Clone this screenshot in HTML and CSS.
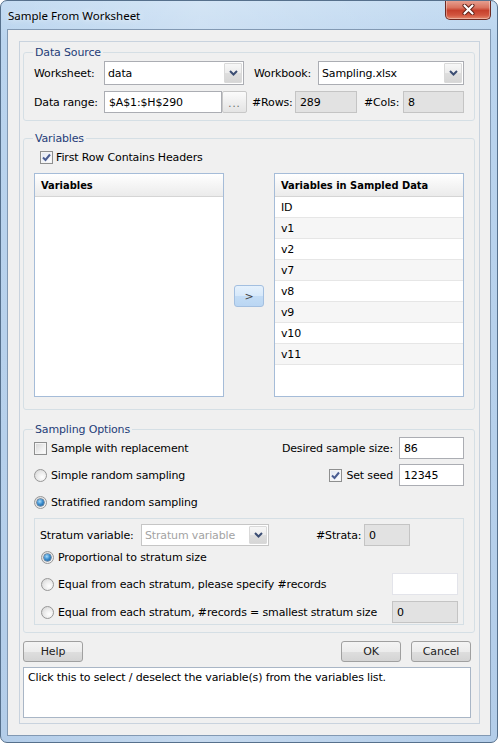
FILE: index.html
```html
<!DOCTYPE html>
<html>
<head>
<meta charset="utf-8">
<title>Sample From Worksheet</title>
<link rel="stylesheet" href="styles.css">
</head>
<body>
<div class="window">
  <div class="titlebar">
    <span class="title">Sample From Worksheet</span>
    <div class="close-btn">
      <svg width="13" height="11" viewBox="0 0 13 11"><path d="M2.5 1.5 L10.5 9.5 M10.5 1.5 L2.5 9.5" stroke="#5b1d14" stroke-width="4" stroke-linecap="round"/><path d="M2.5 1.5 L10.5 9.5 M10.5 1.5 L2.5 9.5" stroke="#fff" stroke-width="2.2" stroke-linecap="round"/></svg>
    </div>
  </div>
  <div class="client">
    <div class="panel">
      <fieldset class="group source">
        <legend>Data Source</legend>
        <div class="src-row src-row-top">
          <span class="lbl lbl-ws">Worksheet:</span>
          <div class="combo combo-ws"><span class="combo-val">data</span><span class="combo-drop"><svg width="9" height="6" viewBox="0 0 9 6"><path d="M1 1 L4.5 4.5 L8 1" fill="none" stroke="#3b4d73" stroke-width="2"/></svg></span></div>
          <span class="lbl lbl-wb">Workbook:</span>
          <div class="combo combo-wb"><span class="combo-val">Sampling.xlsx</span><span class="combo-drop"><svg width="9" height="6" viewBox="0 0 9 6"><path d="M1 1 L4.5 4.5 L8 1" fill="none" stroke="#3b4d73" stroke-width="2"/></svg></span></div>
        </div>
        <div class="src-row src-row-bottom">
          <span class="lbl lbl-ws">Data range:</span>
          <div class="tb tb-range">$A$1:$H$290</div>
          <div class="dots-btn">...</div>
          <span class="lbl lbl-rows">#Rows:</span>
          <div class="tb ro tb-rows">289</div>
          <span class="lbl lbl-cols">#Cols:</span>
          <div class="tb ro tb-cols">8</div>
        </div>
      </fieldset>

      <fieldset class="group variables">
        <legend>Variables</legend>
        <div class="check-row headers-row">
          <span class="cb checked"><svg width="11" height="11" viewBox="0 0 11 11"><path d="M2 5.5 L4.5 8 L9 2.5" fill="none" stroke="#4a5d92" stroke-width="2"/></svg></span>
          <span>First Row Contains Headers</span>
        </div>
        <div class="lists">
          <div class="list">
            <div class="list-head">Variables</div>
          </div>
          <div class="move-btn">&gt;</div>
          <div class="list">
            <div class="list-head">Variables in Sampled Data</div>
            <div class="list-item">ID</div>
            <div class="list-item alt">v1</div>
            <div class="list-item">v2</div>
            <div class="list-item alt">v7</div>
            <div class="list-item">v8</div>
            <div class="list-item alt">v9</div>
            <div class="list-item">v10</div>
            <div class="list-item alt">v11</div>
          </div>
        </div>
      </fieldset>

      <fieldset class="group sampling">
        <legend>Sampling Options</legend>
        <div class="opt-row">
          <div class="opt-left"><span class="cb"></span><span class="opt-text">Sample with replacement</span></div>
          <div class="opt-right"><span>Desired sample size:</span><div class="tb tb-num">86</div></div>
        </div>
        <div class="opt-row">
          <div class="opt-left"><span class="rb"></span><span class="opt-text">Simple random sampling</span></div>
          <div class="opt-right"><span class="cb checked"><svg width="11" height="11" viewBox="0 0 11 11"><path d="M2 5.5 L4.5 8 L9 2.5" fill="none" stroke="#4a5d92" stroke-width="2"/></svg></span><span class="seed-text">Set seed</span><div class="tb tb-num">12345</div></div>
        </div>
        <div class="opt-row">
          <div class="opt-left"><span class="rb on"></span><span class="opt-text">Stratified random sampling</span></div>
        </div>
        <div class="strata-box">
          <div class="strata-row">
            <span class="lbl lbl-stratum">Stratum variable:</span>
            <div class="combo combo-stratum disabled"><span class="combo-val">Stratum variable</span><span class="combo-drop"><svg width="9" height="6" viewBox="0 0 9 6"><path d="M1 1 L4.5 4.5 L8 1" fill="none" stroke="#3b4d73" stroke-width="2"/></svg></span></div>
            <span class="lbl lbl-strata">#Strata:</span>
            <div class="tb ro tb-strata">0</div>
          </div>
          <div class="strata-opt strata-prop">
            <div class="opt-left"><span class="rb on"></span><span class="opt-text">Proportional to stratum size</span></div>
          </div>
          <div class="strata-opt strata-eq1">
            <div class="opt-left"><span class="rb"></span><span class="opt-text">Equal from each stratum, please specify #records</span></div>
            <div class="tb tb-eq blank"></div>
          </div>
          <div class="strata-opt strata-eq2">
            <div class="opt-left"><span class="rb"></span><span class="opt-text">Equal from each stratum, #records = smallest stratum size</span></div>
            <div class="tb ro tb-eq">0</div>
          </div>
        </div>
      </fieldset>

      <div class="button-row">
        <div class="btn">Help</div>
        <div class="btn-group">
          <div class="btn">OK</div>
          <div class="btn">Cancel</div>
        </div>
      </div>
      <div class="desc">Click this to select / deselect the variable(s) from the variables list.</div>
    </div>
  </div>
</div>
</body>
</html>
```

FILE: styles.css
```css
* { box-sizing: border-box; }
html, body { margin: 0; padding: 0; }
body {
  width: 498px;
  height: 743px;
  background: #ffffff;
  font-family: "DejaVu Sans", sans-serif;
  font-size: 11px;
  letter-spacing: -0.15px;
  color: #000;
  overflow: hidden;
}

.window {
  width: 498px;
  height: 743px;
  border: 1px solid #56708c;
  border-radius: 7px;
  background: linear-gradient(90deg, rgba(255,255,255,0.0) 0%, rgba(255,255,255,0.25) 40%, rgba(255,255,255,0.0) 100%),
              linear-gradient(180deg, #c5dcf2 0%, #bad4ee 40px, #b3cde9 100%);
  display: flex;
  flex-direction: column;
  overflow: hidden;
}

.titlebar {
  height: 28px;
  flex: none;
  display: flex;
  align-items: center;
  justify-content: space-between;
  padding-left: 7px;
}
.title {
  font-family: "Noto Sans", "DejaVu Sans", sans-serif;
  font-size: 11.5px;
  letter-spacing: 0;
  color: #000;
  text-shadow: 0 0 6px rgba(255,255,255,0.9);
}
.close-btn {
  align-self: flex-start;
  width: 46px;
  height: 20px;
  margin-right: 6px;
  margin-top: -1px;
  border: 1px solid #6e2a22;
  border-top: none;
  border-radius: 0 0 5px 5px;
  background: linear-gradient(180deg, #e8a596 0%, #d9735f 40%, #c6402c 55%, #d2563f 80%, #e48a6e 100%);
  display: flex;
  align-items: center;
  justify-content: center;
  box-shadow: inset 0 0 0 1px rgba(255,255,255,0.35);
}

.client {
  flex: none;
  height: 707px;
  margin: 0 6px 6px 6px;
  border: 1px solid #8299b3;
  background: #f0f0f0;
  padding: 11px 10px 11px 11px;
}

.panel {
  height: 683px;
  border: 1px solid #c9d3de;
  padding: 4px 4px 4px 3px;
}

.group {
  margin: 0;
  border: 1px solid #d5dfe5;
  border-radius: 3px;
  padding: 2px 9px 8px 10px;
  min-width: 0;
}
.group legend {
  padding: 0 2px;
  margin-left: -1px;
  line-height: 13px;
  color: #1f3d78;
}

.lbl { white-space: nowrap; }

/* Data source */
.source { padding-bottom: 7px; }
.src-row { display: flex; align-items: center; }
.src-row-top { height: 24px; }
.src-row-bottom { height: 22px; margin-top: 6px; }
.lbl-ws { width: 70px; }
.lbl-wb { width: 64px; margin-left: 10px; }
.lbl-rows { width: 43px; margin-left: 5px; }
.lbl-cols { width: 39px; margin-left: 7px; }

.combo {
  height: 24px;
  border: 1px solid #abadb3;
  background: #fff;
  display: flex;
  align-items: stretch;
}
.combo-ws { width: 140px; }
.combo-wb { width: 146px; }
.combo-val {
  flex: 1;
  display: flex;
  align-items: center;
  padding-left: 3px;
  white-space: nowrap;
  overflow: hidden;
}
.combo-drop {
  width: 18px;
  margin: 1px;
  border: 1px solid #d9d9d9;
  border-radius: 1px;
  background: linear-gradient(180deg, #f7f7f7 0%, #ececec 50%, #dedede 51%, #d6d6d6 100%);
  display: flex;
  align-items: center;
  justify-content: center;
}

.tb {
  height: 22px;
  border: 1px solid #abadb3;
  background: #fff;
  padding: 0 4px;
  display: flex;
  align-items: center;
  white-space: nowrap;
}
.tb.ro { background: #e2e2e2; border-color: #c4c4c4; }
.tb-range { width: 118px; }
.tb-rows { width: 62px; }
.tb-cols { width: 61px; }
.dots-btn {
  width: 25px;
  height: 22px;
  border: 1px solid #c8c8c8;
  border-radius: 2px;
  background: linear-gradient(180deg, #fbfbfb 0%, #efefef 50%, #e4e4e4 100%);
  color: #666;
  font-size: 10px;
  display: flex;
  align-items: flex-end;
  justify-content: center;
  padding-bottom: 3px;
  letter-spacing: 1px;
}

/* Variables */
.variables { margin-top: 11px; padding: 5px 10px 12px 10px; }
.check-row { display: flex; align-items: center; height: 15px; }
.headers-row { padding-left: 6px; gap: 3px; }

.cb {
  width: 13px;
  height: 13px;
  flex: none;
  border: 1px solid #8e8f8f;
  background: linear-gradient(135deg, #d4d4d4 0%, #f0f0f0 60%, #ffffff 100%);
  box-shadow: inset 0 0 0 1px #f4f4f4;
  display: inline-flex;
  align-items: center;
  justify-content: center;
}
.cb.checked { background: linear-gradient(135deg, #dfe6f2 0%, #f3f5fa 60%, #ffffff 100%); }

.rb {
  width: 13px;
  height: 13px;
  flex: none;
  border-radius: 50%;
  border: 1px solid #979797;
  background: radial-gradient(circle at 65% 65%, #ffffff 0%, #eaeaea 50%, #cfcfcf 100%);
  display: inline-flex;
  align-items: center;
  justify-content: center;
}
.rb.on::after {
  content: "";
  width: 7px;
  height: 7px;
  border-radius: 50%;
  background: radial-gradient(circle at 40% 35%, #a9dcfb 0%, #3d8fcf 45%, #134f86 100%);
  box-shadow: 0 0 0 0.5px #1b3d62;
}

.lists {
  margin-top: 8px;
  display: grid;
  grid-template-columns: 190px 1fr 190px;
}
.list {
  height: 224px;
  border: 1px solid #a5bcd8;
  background: #fff;
}
.list-head {
  height: 23px;
  border-bottom: 1px solid #d5d5d5;
  background: linear-gradient(180deg, #ffffff 0%, #f5f5f5 50%, #ebebeb 100%);
  font-family: "DejaVu Sans Condensed", "DejaVu Sans", sans-serif;
  font-weight: bold;
  letter-spacing: 0;
  padding-left: 6px;
  display: flex;
  align-items: center;
}
.list-item {
  height: 21px;
  border-bottom: 1px solid #e6e6e6;
  padding-left: 6px;
  display: flex;
  align-items: center;
}
.list-item.alt { background: #f6f6f6; }
.move-btn {
  justify-self: center;
  align-self: start;
  margin-top: 112px;
  width: 30px;
  height: 22px;
  border: 1px solid #a3bfe0;
  border-radius: 3px;
  background: linear-gradient(180deg, #e5f1fc 0%, #d6e8fa 50%, #c3dcf5 51%, #bad6f3 100%);
  color: #444;
  display: flex;
  align-items: center;
  justify-content: center;
}

/* Sampling */
.sampling { margin-top: 13px; padding: 1px 10px 7px 10px; }
.opt-row {
  height: 22px;
  display: flex;
  align-items: center;
  justify-content: space-between;
  margin-bottom: 5px;
}
.opt-left { display: flex; align-items: center; }
.opt-text { margin-left: 4px; white-space: nowrap; }
.opt-right { display: flex; align-items: center; white-space: nowrap; }
.tb-num { width: 65px; margin-left: 6px; }
.seed-text { margin-left: 4px; }

.strata-box {
  border: 1px solid #d5dfe5;
  padding: 5px 5px 1px 5px;
}
.strata-row { height: 22px; display: flex; align-items: center; }
.lbl-stratum { width: 101px; }
.combo-stratum { width: 128px; height: 22px; border-color: #c6c6c6; }
.combo.disabled .combo-val { color: #a3a3a3; }
.lbl-strata { width: 48px; margin-left: 47px; }
.tb-strata { width: 46px; }

.strata-opt {
  height: 22px;
  display: flex;
  align-items: center;
  justify-content: space-between;
}
.strata-opt .opt-left { padding-left: 1px; }
.strata-eq1 { margin-top: 5px; }
.strata-eq2 { margin-top: 6px; }
.tb-eq { width: 66px; }
.tb.blank { border-color: #e3e4ea; }

/* Bottom */
.button-row {
  margin-top: 8px;
  display: flex;
  justify-content: space-between;
  margin-right: 4px;
}
.btn-group { display: flex; gap: 10px; }
.btn {
  width: 60px;
  height: 21px;
  border: 1px solid #a0a0a0;
  border-radius: 3px;
  background: linear-gradient(180deg, #f4f4f4 0%, #ececec 50%, #dedede 51%, #d4d4d4 100%);
  color: #222;
  display: flex;
  align-items: center;
  justify-content: center;
}
.desc {
  margin-top: 5px;
  margin-right: 4px;
  height: 51px;
  border: 1px solid #a9b6c6;
  background: #fff;
  padding: 3px 4px;
  line-height: 13px;
}
```
